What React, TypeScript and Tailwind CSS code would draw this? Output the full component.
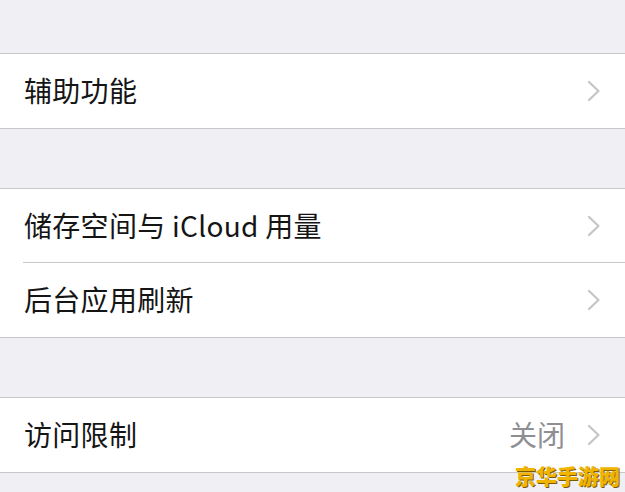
import React from "react";

const Chevron = () => (
  <svg width="14" height="22" viewBox="0 0 14 22" className="shrink-0">
    <path d="M2 2 L11.5 11 L2 20" fill="none" stroke="#c4c4c9" strokeWidth="2.2" strokeLinecap="round" strokeLinejoin="round" />
  </svg>
);

const Row = ({ label, value, divider }: { label: string; value?: string; divider?: boolean }) => (
  <div className="relative flex h-[74px] items-center pl-[24px] pr-[24px] bg-white">
    <span className="flex-1 pb-[3px] text-[28px] text-[#151515] tracking-[0.3px]">{label}</span>
    {value && <span className="mr-[22px] pb-[3px] text-[28px] text-[#8e8e93]">{value}</span>}
    <Chevron />
    {divider && <div className="absolute bottom-0 left-[23px] right-0 h-px bg-[#c8c7cc]" />}
  </div>
);

const Group = ({ children }: { children: React.ReactNode }) => (
  <div className="border-y border-[#c8c7cc] bg-white">{children}</div>
);

export default function App() {
  return (
    <div
      className="relative h-[492px] w-[625px] overflow-hidden bg-[#efeff4]"
      style={{ fontFamily: '"Noto Sans CJK SC", "Noto Sans", sans-serif' }}
    >
      <div className="h-[53px]" />
      <Group>
        <Row label="辅助功能" />
      </Group>
      <div className="h-[59px]" />
      <Group>
        <Row label="储存空间与 iCloud 用量" divider />
        <Row label="后台应用刷新" />
      </Group>
      <div className="h-[59px]" />
      <Group>
        <Row label="访问限制" value="关闭" />
      </Group>
      <div className="absolute bottom-[1px] right-[5px] text-[21px] font-black text-[#f0b400] [text-shadow:1px_1px_0_#7a5a00]">
        京华手游网
      </div>
    </div>
  );
}
